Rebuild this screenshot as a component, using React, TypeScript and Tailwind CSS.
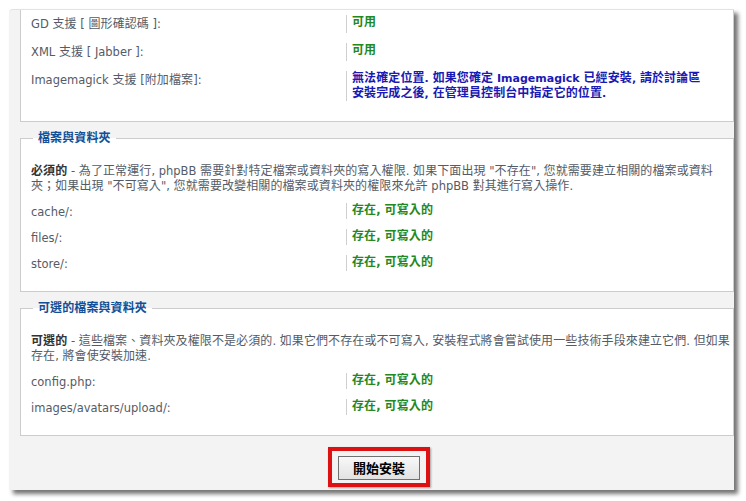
import React from "react";

const CJK = /([\u2E80-\u9FFF\uF900-\uFAFF\uFE30-\uFE4F\uFF00-\uFFEF\u3000-\u303F]+)/;

function T({ children }: { children: string }) {
  const parts = children.split(CJK);
  return (
    <>
      {parts.map((p, i) =>
        i % 2 === 1 ? (
          <span key={i} className="text-[12px] tracking-[0.1px] leading-none">
            {p}
          </span>
        ) : (
          <React.Fragment key={i}>{p}</React.Fragment>
        )
      )}
    </>
  );
}

function Row({
  label,
  children,
  h,
}: {
  label: string;
  children: React.ReactNode;
  h: string;
}) {
  return (
    <div className="flex mb-[10px] last:mb-0">
      <div className="w-[315px] shrink-0 pt-[2px] h-[16px] leading-[15px] text-[#555b66] whitespace-nowrap">
        <T>{label}</T>
      </div>
      <div className={`border-l border-[#cfcfcf] pl-[5px] leading-[15px] font-bold whitespace-nowrap ${h}`}>
        {children}
      </div>
    </div>
  );
}

function Ok() {
  return (
    <span className="text-[#228822]">
      <T>存在, 可寫入的</T>
    </span>
  );
}

function Line({ children }: { children: React.ReactNode }) {
  return <div className="h-[15px] leading-[15px] whitespace-nowrap">{children}</div>;
}

export default function App() {
  return (
    <div className="w-[746px] h-[501px] bg-white pt-[9px] pl-[9px] font-['DejaVu_Sans','Noto_Sans_CJK_TC',sans-serif] text-[11.5px]">
      <div className="w-[725px] h-[481px] overflow-hidden bg-[#f3f3f3] rounded-tl-[4px] border-t border-[#e2e2e2] shadow-[4px_4px_4px_rgba(0,0,0,0.55)] pl-[11px]">
        {/* fieldset 1 (top cut) */}
        <div className="border-x border-b border-[#cccccc] bg-white pl-[10px] pt-[5px] pb-[20px]">
          <Row label="GD 支援 [ 圖形確認碼 ]:" h="h-[18px]">
            <span className="text-[#228822]">
              <T>可用</T>
            </span>
          </Row>
          <Row label="XML 支援 [ Jabber ]:" h="h-[18px]">
            <span className="text-[#228822]">
              <T>可用</T>
            </span>
          </Row>
          <Row label="Imagemagick 支援 [附加檔案]:" h="h-[30px]">
            <div className="text-[#1a1ab4] text-[11px]">
              <Line>
                <T>無法確定位置. 如果您確定 Imagemagick 已經安裝, 請於討論區</T>
              </Line>
              <Line>
                <T>安裝完成之後, 在管理員控制台中指定它的位置.</T>
              </Line>
            </div>
          </Row>
        </div>

        {/* fieldset 2 */}
        <fieldset className="mt-[8px] border border-[#cccccc] bg-white pl-[10px] pt-[18px] pb-[20px]">
          <legend className="ml-[2px] px-[5px] h-[16px] leading-[16px] font-bold text-[#115098]">
            <T>檔案與資料夾</T>
          </legend>
          <div className="text-[#555b66] mb-[9px]">
            <Line>
              <b className="text-[#333333]">
                <T>必須的</T>
              </b>
              <T>{' - 為了正常運行, phpBB 需要針對特定檔案或資料夾的寫入權限. 如果下面出現 "不存在", 您就需要建立相關的檔案或資料'}</T>
            </Line>
            <Line>
              <T>{'夾；如果出現 "不可寫入", 您就需要改變相關的檔案或資料夾的權限來允許 phpBB 對其進行寫入操作.'}</T>
            </Line>
          </div>
          <Row label="cache/:" h="h-[16px]">
            <Ok />
          </Row>
          <Row label="files/:" h="h-[16px]">
            <Ok />
          </Row>
          <Row label="store/:" h="h-[16px]">
            <Ok />
          </Row>
        </fieldset>

        {/* fieldset 3 */}
        <fieldset className="mt-[8px] border border-[#cccccc] bg-white pl-[10px] pt-[18px] pb-[20px]">
          <legend className="ml-[2px] px-[5px] h-[16px] leading-[16px] font-bold text-[#115098]">
            <T>可選的檔案與資料夾</T>
          </legend>
          <div className="text-[#555b66] mb-[9px]">
            <Line>
              <b className="text-[#333333]">
                <T>可選的</T>
              </b>
              <T>{' - 這些檔案、資料夾及權限不是必須的. 如果它們不存在或不可寫入, 安裝程式將會嘗試使用一些技術手段來建立它們. 但如果'}</T>
            </Line>
            <Line>
              <T>存在, 將會使安裝加速.</T>
            </Line>
          </div>
          <Row label="config.php:" h="h-[16px]">
            <Ok />
          </Row>
          <Row label="images/avatars/upload/:" h="h-[16px]">
            <Ok />
          </Row>
        </fieldset>

        {/* submit */}
        <div className="flex justify-center pl-[4px] mt-[11px]">
          <div className="border-4 border-[#dd1111] px-[6px] pt-[5px] pb-[3px] shadow-[1px_1px_2px_rgba(0,0,0,0.35)]">
            <button className="w-[82px] h-[24px] border border-[#707070] bg-gradient-to-b from-[#f8f8f8] to-[#e2e2e2] text-[13px] font-bold text-black leading-[22px] font-['Noto_Sans_CJK_TC',sans-serif]">
              開始安裝
            </button>
          </div>
        </div>
      </div>
    </div>
  );
}
